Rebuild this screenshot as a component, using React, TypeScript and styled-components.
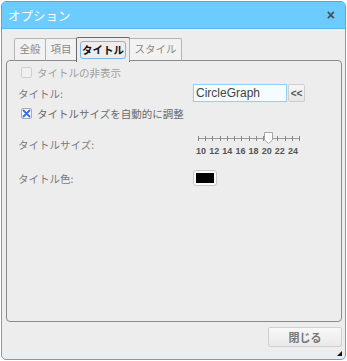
import React from "react";
import styled, { createGlobalStyle } from "styled-components";

const GlobalStyle = createGlobalStyle`
  html, body {
    margin: 0;
    padding: 0;
    background: #ffffff;
  }
  body {
    font-family: "Liberation Sans", "Noto Sans CJK JP", sans-serif;
  }
`;

const Window = styled.div`
  margin: 1px;
  width: 345px;
  height: 359px;
  box-sizing: border-box;
  border: 1px solid #46acf1;
  border-radius: 5px;
  background: #ededed;
  display: flex;
  flex-direction: column;
  overflow: hidden;
  position: relative;
`;

const TitleBar = styled.div`
  height: 27px;
  flex: none;
  background: #6ccbff;
  display: flex;
  align-items: center;
  justify-content: space-between;
  padding: 0 10px 0 6px;
  box-sizing: border-box;
  border-bottom: 1px solid #5bb8ec;
`;

const TitleText = styled.span`
  color: #ffffff;
  font-family: "Noto Sans CJK JP", sans-serif;
  font-size: 12.5px;
`;

const CloseX = styled.span`
  color: #4a4a4a;
  font-size: 14px;
  font-weight: bold;
  font-family: "Liberation Sans", sans-serif;
  line-height: 1;
`;

const Body = styled.div`
  flex: 1;
  display: flex;
  flex-direction: column;
  padding: 8px 3px 0 4px;
`;

const Tabs = styled.div`
  display: flex;
  align-items: flex-end;
  padding-left: 8px;
  height: 24px;
  position: relative;
  z-index: 1;
  margin-bottom: -1px;
`;

const Tab = styled.div<{ $active?: boolean }>`
  box-sizing: border-box;
  height: ${(p) => (p.$active ? "25px" : "23px")};
  margin-bottom: ${(p) => (p.$active ? "-1px" : "0")};
  padding: ${(p) => (p.$active ? "3px 3px 0" : "2px 4.5px 0")};
  border: 1px solid ${(p) => (p.$active ? "#6a6a6a" : "#b4b4b4")};
  border-bottom: ${(p) => (p.$active ? "none" : "1px solid #8a8a8a")};
  border-radius: 2px 2px 0 0;
  background: ${(p) => (p.$active ? "#ededed" : "#f2f2f2")};
  color: ${(p) => (p.$active ? "#111" : "#8a8a8a")};
  font-family: "Noto Sans CJK JP", sans-serif;
  font-size: 10.5px;
  font-weight: ${(p) => (p.$active ? "bold" : "normal")};
  margin-right: -1px;
  display: flex;
  align-items: flex-start;
`;

const FocusRing = styled.span`
  border: 1px solid #7ab8ea;
  border-radius: 3px;
  padding: 0 1px;
  line-height: 16px;
`;

const Panel = styled.div`
  height: 262px;
  box-sizing: border-box;
  border: 1px solid #8a8a8a;
  border-radius: 4px;
  padding: 2px 0 0 11px;
  display: flex;
  flex-direction: column;
`;

const Row = styled.div<{ $h: number; $mt?: number }>`
  display: flex;
  align-items: center;
  height: ${(p) => p.$h}px;
  margin-top: ${(p) => p.$mt ?? 0}px;
`;

const Label = styled.span`
  width: 175px;
  flex: none;
  color: #7a7a7a;
  font-family: "Noto Sans CJK JP", sans-serif;
  font-size: 10.5px;
`;

const CheckLabel = styled.label<{ $disabled?: boolean }>`
  display: flex;
  align-items: center;
  gap: 5px;
  padding-left: 3px;
  color: ${(p) => (p.$disabled ? "#a0a0a0" : "#6a6a6a")};
  font-family: "Noto Sans CJK JP", sans-serif;
  font-size: 10.5px;
`;

const Box = styled.span<{ $disabled?: boolean }>`
  width: 11px;
  height: 11px;
  box-sizing: border-box;
  border: 1px solid ${(p) => (p.$disabled ? "#cfcfcf" : "#a8a8a8")};
  border-radius: 2px;
  background: ${(p) => (p.$disabled ? "#f0f0f0" : "#fafafa")};
  display: flex;
  align-items: center;
  justify-content: center;
`;

const TextInput = styled.div`
  width: 94px;
  height: 18px;
  box-sizing: border-box;
  border: 1px solid #8fd2f7;
  background: #f6fbff;
  color: #444;
  font-family: "Liberation Sans", sans-serif;
  font-size: 12px;
  padding: 1px 2px 0;
  line-height: 14px;
  box-shadow: 0 0 1px #bfe6fb;
`;

const SmallButton = styled.div`
  width: 17px;
  height: 18px;
  margin-left: 1px;
  box-sizing: border-box;
  border: 1px solid #cfcfcf;
  border-radius: 2px;
  background: linear-gradient(#f7f7f7, #e6e6e6);
  color: #555;
  font-family: "Liberation Sans", sans-serif;
  font-size: 10px;
  font-weight: bold;
  display: flex;
  align-items: center;
  justify-content: center;
`;

const Slider = styled.div`
  width: 104px;
  margin-left: 4px;
  display: flex;
  flex-direction: column;
`;

const Track = styled.div`
  position: relative;
  height: 14px;
`;

const Thumb = styled.svg`
  position: absolute;
  top: 0;
`;

const Scale = styled.div`
  display: flex;
  justify-content: space-between;
  width: 102px;
  margin-left: -1px;
  margin-top: 1px;
  color: #555;
  font-family: "Liberation Sans", sans-serif;
  font-size: 9px;
  font-weight: bold;
  line-height: 11px;
`;

const Swatch = styled.div`
  width: 22px;
  height: 14px;
  margin-left: 1px;
  box-sizing: border-box;
  border: 2px solid #fafafa;
  outline: 1px solid #c8c8c8;
  border-radius: 2px;
  background: #000;
`;

const Footer = styled.div`
  display: flex;
  justify-content: flex-end;
  padding: 5px 0 0;
`;

const CloseButton = styled.div`
  width: 74px;
  height: 20px;
  box-sizing: border-box;
  border: 1px solid #d0d0d0;
  border-radius: 2px;
  background: linear-gradient(#f8f8f8, #e9e9e9);
  color: #777;
  font-family: "Noto Sans CJK JP", sans-serif;
  font-size: 11px;
  font-weight: bold;
  display: flex;
  align-items: center;
  justify-content: center;
`;

const Grip = styled.div`
  position: absolute;
  right: 3px;
  bottom: 3px;
  width: 0;
  height: 0;
  border-left: 5px solid transparent;
  border-bottom: 5px solid #111;
`;

const sizes = [10, 12, 14, 16, 18, 20, 22, 24];

const App = () => {
  const value = 20;
  const trackLeft = 1;
  const trackWidth = 101;
  const thumbX = trackLeft + ((value - 10) / 14) * trackWidth - 7;

  return (
    <>
      <GlobalStyle />
      <Window>
        <TitleBar>
          <TitleText>オプション</TitleText>
          <CloseX>×</CloseX>
        </TitleBar>
        <Body>
          <Tabs>
            <Tab>全般</Tab>
            <Tab>項目</Tab>
            <Tab $active>
              <FocusRing>タイトル</FocusRing>
            </Tab>
            <Tab>スタイル</Tab>
          </Tabs>
          <Panel>
            <Row $h={16} $mt={1}>
              <CheckLabel $disabled>
                <Box $disabled />
                タイトルの非表示
              </CheckLabel>
            </Row>
            <Row $h={20} $mt={3}>
              <Label>タイトル:</Label>
              <TextInput>CircleGraph</TextInput>
              <SmallButton>&lt;&lt;</SmallButton>
            </Row>
            <Row $h={16} $mt={2}>
              <CheckLabel>
                <Box>
                  <svg width="9" height="9" viewBox="0 0 9 9">
                    <path
                      d="M1.5 1.5 L7.5 7.5 M7.5 1.5 L1.5 7.5"
                      stroke="#2f6ff0"
                      strokeWidth="1.8"
                      strokeLinecap="round"
                    />
                  </svg>
                </Box>
                タイトルサイズを自動的に調整
              </CheckLabel>
            </Row>
            <Row $h={30} $mt={8}>
              <Label>タイトルサイズ:</Label>
              <Slider>
                <Track>
                  <svg width="104" height="14" viewBox="0 0 104 14">
                    <line x1="1" y1="7.5" x2="102" y2="7.5" stroke="#9a9a9a" strokeWidth="1" />
                    {Array.from({ length: 15 }).map((_, i) => {
                      const x = Math.round(1 + (i * 101) / 14) + 0.5;
                      return (
                        <line key={i} x1={x} y1="5" x2={x} y2="10" stroke="#8a8a8a" strokeWidth="1" />
                      );
                    })}
                  </svg>
                  <Thumb width="11" height="14" viewBox="0 0 11 14" style={{ left: thumbX }}>
                    <path
                      d="M1.5 1.5 H9.5 V9 L5.5 12.5 L1.5 9 Z"
                      fill="#fbfbfb"
                      stroke="#a6a6a6"
                      strokeWidth="1"
                    />
                  </Thumb>
                </Track>
                <Scale>
                  {sizes.map((s) => (
                    <span key={s}>{s}</span>
                  ))}
                </Scale>
              </Slider>
            </Row>
            <Row $h={20} $mt={9}>
              <Label>タイトル色:</Label>
              <Swatch />
            </Row>
          </Panel>
          <Footer>
            <CloseButton>閉じる</CloseButton>
          </Footer>
        </Body>
        <Grip />
      </Window>
    </>
  );
};

export default App;
